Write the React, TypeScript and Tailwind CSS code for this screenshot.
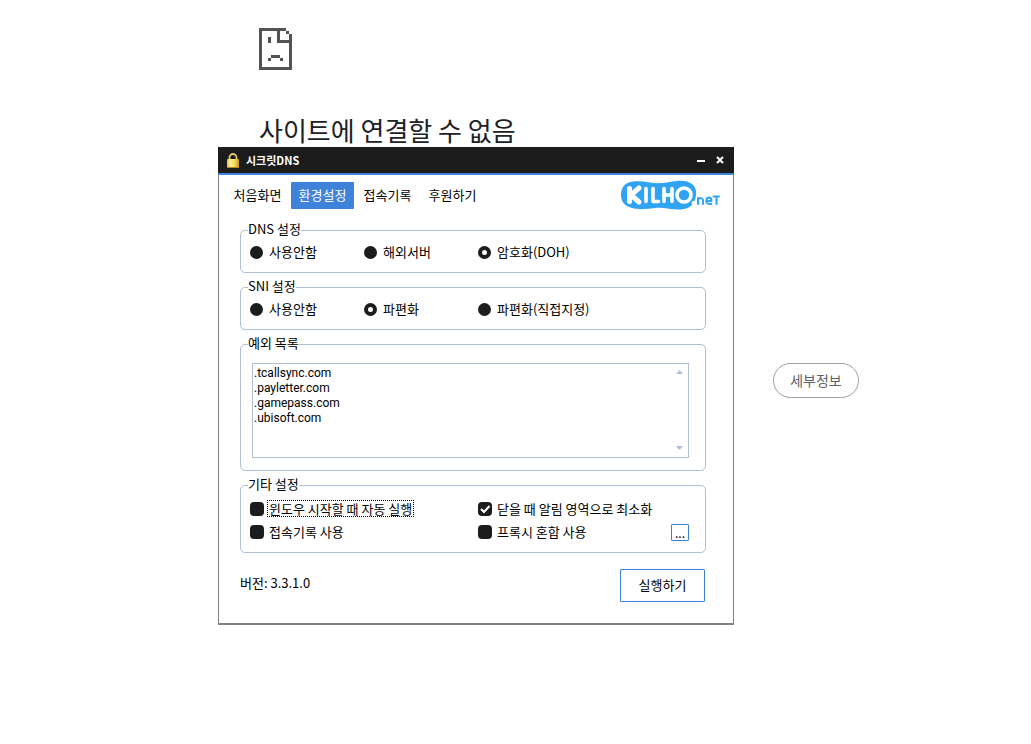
import type {ReactNode} from "react"

type Option = { label: string; checked?: boolean }

const tabs = ["처음화면", "환경설정", "접속기록", "후원하기"]

const dnsOptions: Option[] = [
    {label: "사용안함"},
    {label: "해외서버"},
    {label: "암호화(DOH)", checked: true},
]

const sniOptions: Option[] = [
    {label: "사용안함"},
    {label: "파편화", checked: true},
    {label: "파편화(직접지정)"},
]

const exceptions = [".tcallsync.com", ".payletter.com", ".gamepass.com", ".ubisoft.com"].join("\n")

function SadPageIcon() {
    return (<svg width="33" height="42" viewBox="0 0 11 14" fill="#535353" shapeRendering="crispEdges" aria-hidden="true">
        <path d="M0 0h9v1H1v12h9V5H6V1h1v3h3V2h1v12H0z"/>
        <path d="M9 1h1v1H9zM3 3h1v2H3zM4 9h3v1H4zM3 10h1v1H3zM7 10h1v1H7z"/>
    </svg>)
}

function LockIcon() {
    return (<svg width="14" height="18" viewBox="0 0 14 18" aria-hidden="true">
        <defs>
            <linearGradient id="brass" x1="0" x2="1" y1="0" y2="0">
                <stop offset="0" stopColor="#e6bd45"/>
                <stop offset="0.3" stopColor="#fff0a0"/>
                <stop offset="0.65" stopColor="#f7d84e"/>
                <stop offset="1" stopColor="#c4962a"/>
            </linearGradient>
        </defs>
        <path d="M3.500 9V6.500a3.500 3.500 0 0 1 7 0V9" fill="none" stroke="#e8cd62" strokeWidth="1.800"/>
        <rect x="1" y="8" width="12" height="9" rx="1" fill="url(#brass)"/>
        <path d="M1 16.500h12" stroke="#b98616"/>
    </svg>)
}

function KilhoLogo() {
    return (<svg width="100" height="32" viewBox="0 0 100 32" role="img" aria-label="KILHO.net">
        <path d="M13 1.500C25 0 31 4 43 3C52 2 57 0 64 1C73 2 77 8 76 15C75 24 70 29 61 29.500C51 30 45 27 35 28C26 29 20 30 12 28C4 26 1 21 1 15C1 7 5 2.500 13 1.500Z" fill="#31a3f3"/>
        <g fill="none" stroke="#fff" strokeLinecap="round" strokeLinejoin="round">
            <path d="M9.500 8.500v13M19 8l-8 7l8 7" strokeWidth="5"/>
            <path d="M26 8.500v13M33 8.500v13h5.500M44 8.500v13M52 8.500v13M44 15h8" strokeWidth="3.600"/>
            <ellipse cx="64" cy="15" rx="7" ry="7" strokeWidth="3.600"/>
        </g>
        <circle cx="73.500" cy="23" r="2" fill="#fff"/>
        <g fill="none" stroke="#31a3f3" strokeWidth="2" strokeLinecap="round" strokeLinejoin="round">
            <path d="M78 24v-6M78 19.500q3.500-3 5 .5v4M86.500 21h5q0-3.500-2.500-3.500t-2.700 3.500t5 3M93.500 16.500h5.500M96.500 16.500v7.500"/>
        </g>
    </svg>)
}

function Group({title, className, children}: { title: string; className: string; children: ReactNode }) {
    return (<fieldset className={`rounded-[5px] border border-[#b0bfd3] ${className}`}>
        <legend className="ml-[7px] h-[13px] leading-[9px]">{title}</legend>
        {children}
    </fieldset>)
}

function RadioRow({name, options}: { name: string; options: Option[] }) {
    return (<div className="grid grid-cols-[114px_114px_1fr] pt-[5px] pl-[9px]">
        {options.map((option) => (
            <label key={option.label} className="flex h-5 items-center gap-[6px]">
                <input
                    type="radio"
                    name={name}
                    defaultChecked={option.checked}
                    className="size-[13px] appearance-none rounded-full bg-[#1c1c1c] checked:border-4 checked:border-[#1c1c1c] checked:bg-white"
                />
                {option.label}
            </label>
        ))}
    </div>)
}

function Check({label, checked, focused}: Option & { focused?: boolean }) {
    return (<label className="flex h-[23px] items-center gap-[3px]">
        <span className="relative size-[14px]">
            <input type="checkbox" defaultChecked={checked}
                   className="peer block size-[14px] appearance-none rounded-[4px] bg-[#1c1c1c]"/>
            <svg viewBox="0 0 14 14" aria-hidden="true"
                 className="pointer-events-none absolute inset-0 hidden peer-checked:block">
                <path d="M3 7l3 3l5.500-6" fill="none" stroke="#fff" strokeWidth="2"/>
            </svg>
        </span>
        <span className={focused ? "border border-dotted border-black px-px leading-[15px]" : "border border-transparent px-px leading-[15px]"}>
            {label}
        </span>
    </label>)
}

function SettingsWindow() {
    return (<section
        className="absolute top-[147px] left-[218px] w-[516px] border border-t-0 border-b-2 border-[#808080] bg-white text-[13px] leading-[18px] text-black">
        <header className="-mx-px flex h-7 items-center border-b-2 border-[#3e82da] bg-[#1c1c1c] pr-[9px] pl-2 text-white">
            <LockIcon/>
            <h2 className="ml-[6px] flex-1 text-[11px] font-bold">시크릿DNS</h2>
            <button type="button" aria-label="최소화" className="mr-1 flex size-[19px] items-center justify-center">
                <svg width="9" height="9" viewBox="0 0 9 9"><path d="M0 5h8" stroke="#fff" strokeWidth="2"/></svg>
            </button>
            <button type="button" aria-label="닫기" className="flex w-[10px] items-center justify-center">
                <svg width="8" height="8" viewBox="0 0 8 8"><path d="M1 1l6 6M7 1l-6 6" stroke="#fff" strokeWidth="2"/></svg>
            </button>
        </header>
        <div className="flex items-start justify-between pt-[5px] pr-[13px] pl-[7px]">
            <nav className="flex gap-[2px] pt-[2px]">
                {tabs.map((tab, i) => (
                    <button key={tab} type="button"
                            className={i === 1 ? "h-[27px] w-[63px] rounded-[1px] bg-[#3e82da] pb-[2px] text-white" : "h-[27px] w-[63px] pb-[2px]"}>
                        {tab}
                    </button>
                ))}
            </nav>
            <KilhoLogo/>
        </div>
        <div className="pr-[27px] pl-[21px]">
            <Group title="DNS 설정" className="mt-[12px] h-[49px]">
                <RadioRow name="dns" options={dnsOptions}/>
            </Group>
            <Group title="SNI 설정" className="mt-[8px] h-[49px]">
                <RadioRow name="sni" options={sniOptions}/>
            </Group>
            <Group title="예외 목록" className="mt-[8px] h-[133px]">
                <div className="relative mt-3 mr-4 ml-[11px]">
                    <textarea
                        aria-label="예외 목록"
                        defaultValue={exceptions}
                        className="block h-[95px] w-full resize-none overflow-hidden border border-[#b0bfd3] px-px pt-[2px] font-[Roboto,'Noto_Sans_CJK_KR',sans-serif] text-[12px] leading-[15px] outline-none"
                    />
                    <svg width="7" height="4" viewBox="0 0 7 4" className="absolute top-[7px] right-[6px]"><path d="M0 4l3.500-4l3.500 4z" fill="#b0bfd3"/></svg>
                    <svg width="7" height="4" viewBox="0 0 7 4" className="absolute right-[6px] bottom-[8px]"><path d="M0 0h7l-3.500 4z" fill="#b0bfd3"/></svg>
                </div>
            </Group>
            <Group title="기타 설정" className="mt-[8px] h-[74px]">
                <div className="grid grid-cols-[228px_1fr_auto] pt-[5px] pr-4 pl-[9px]">
                    <Check label="윈도우 시작할 때 자동 실행" focused/>
                    <Check label="닫을 때 알림 영역으로 최소화" checked/>
                    <span/>
                    <Check label="접속기록 사용"/>
                    <Check label="프록시 혼합 사용"/>
                    <button type="button" className="mt-1 h-[17px] w-[18px] rounded-[1px] border border-[#3e82da] text-[12px] leading-[15px]">...</button>
                </div>
            </Group>
            <div className="flex items-start justify-between pt-4 pb-[21px]">
                <p className="pt-[5px]">버전: 3.3.1.0</p>
                <button type="button" className="mr-px h-[33px] w-[85px] rounded-[1px] border border-[#3e82da] pb-[2px]">실행하기</button>
            </div>
        </div>
    </section>)
}

export default function App() {
    return (<div className="relative min-h-screen bg-white font-['Noto_Sans_CJK_KR',sans-serif]">
        <main className="max-w-[859px] pt-7 pl-[259px]">
            <SadPageIcon/>
            <h1 className="mt-[42px] text-[26px] leading-[36px] text-[#202124]">사이트에 연결할 수 없음</h1>
            <div className="mt-[215px] flex justify-end">
                <button type="button" className="h-[35px] w-[86px] rounded-full border border-[#9aa0a6] text-[14px] text-[#5f6368]">
                    세부정보
                </button>
            </div>
        </main>
        <SettingsWindow/>
    </div>)
}
